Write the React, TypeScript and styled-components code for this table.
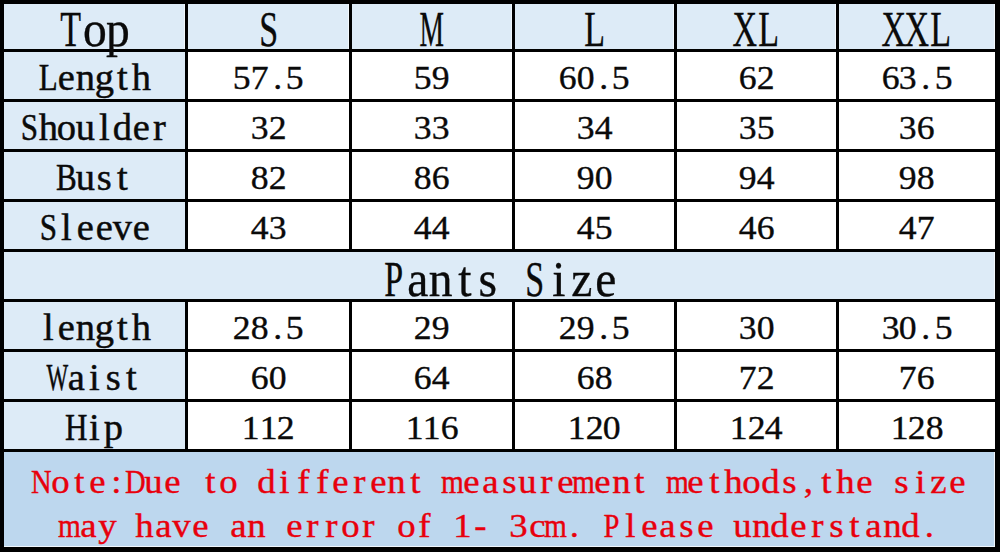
import React from "react";
import styled, { createGlobalStyle } from "styled-components";

const Global = createGlobalStyle`
  html, body { margin: 0; padding: 0; background: #000; }
  body { width: 1000px; height: 552px; overflow: hidden; }
  #root { width: 1000px; height: 552px; }
`;

const Sheet = styled.div`
  box-sizing: border-box;
  width: 1000px;
  height: 552px;
  display: grid;
  grid-template-columns: 181px 161px 160px 159px 159px 156px;
  grid-template-rows: 45px repeat(8, 47px) 95px;
  gap: 3px;
  padding: 4px 5px 5px 4px;
  background: #000;
  font-family: "Liberation Serif", "Times New Roman", "DejaVu Serif", serif;
  color: #0a0a0a;
`;

type Tone = "head" | "label" | "data" | "note";

const bg: Record<Tone, string> = {
  head: "#ddebf7",
  label: "#ddebf7",
  data: "#ffffff",
  note: "#bdd7ee",
};

const Cell = styled.div<{ $tone: Tone; $pad?: number; $span?: boolean }>`
  background: ${(p) => bg[p.$tone]};
  display: flex;
  flex-direction: column;
  align-items: center;
  justify-content: center;
  box-sizing: border-box;
  padding-top: ${(p) => p.$pad ?? 4}px;
  grid-column: ${(p) => (p.$span ? "1 / -1" : "auto")};
  box-shadow: ${(p) =>
    p.$tone === "note"
      ? "inset -1px -1px 0 rgba(255,255,255,0.75)"
      : p.$tone === "head"
      ? "inset -1px 0 0 rgba(255,255,255,0.6)"
      : "none"};
  overflow: visible;
`;

const Line = styled.div<{ $size: number; $lh: number; $color?: string; $stroke: number }>`
  display: flex;
  justify-content: center;
  font-family: "Liberation Serif", "Times New Roman", "DejaVu Serif", serif;
  font-size: ${(p) => p.$size}px;
  line-height: ${(p) => p.$lh}px;
  height: ${(p) => p.$lh}px;
  color: ${(p) => p.$color ?? "#0a0a0a"};
  -webkit-text-stroke: ${(p) => p.$stroke}px ${(p) => p.$color ?? "#0a0a0a"};
  white-space: pre;
`;

const Glyph = styled.span<{ $w: number; $k: number }>`
  display: inline-flex;
  justify-content: center;
  width: ${(p) => p.$w}px;
  transform: scaleX(${(p) => p.$k});
  white-space: pre;
`;

type Style = {
  size: number;
  w: number;
  lh: number;
  upper: number;
  lower: number;
  wide: number;
  stroke: number;
  color?: string;
};

const HEAD: Style = { size: 50, w: 23.5, lh: 50, upper: 0.68, lower: 0.95, wide: 0.55, stroke: 0.35 };
const LABEL: Style = { size: 37, w: 18.6, lh: 37, upper: 0.84, lower: 1.04, wide: 0.62, stroke: 0.45 };
const NUM: Style = { size: 34, w: 17.6, lh: 34, upper: 1, lower: 1.05, wide: 1, stroke: 0.35 };
const NOTE: Style = {
  size: 34,
  w: 18.7,
  lh: 44,
  upper: 0.84,
  lower: 1.08,
  wide: 0.64,
  stroke: 0.4,
  color: "#e8000c",
};

const kFor = (ch: string, s: Style) => {
  if (/[WM]/.test(ch)) return s.wide;
  if (/[A-Z]/.test(ch)) return s.upper;
  if (/[mw]/.test(ch)) return s.lower * 0.8;
  return s.lower;
};

const Mono: React.FC<{ text: string; s: Style }> = ({ text, s }) => (
  <Line $size={s.size} $lh={s.lh} $color={s.color} $stroke={s.stroke}>
    {Array.from(text).map((ch, i) => (
      <Glyph key={i} $w={s.w} $k={kFor(ch, s)}>
        {ch === " " ? "\u00a0" : ch}
      </Glyph>
    ))}
  </Line>
);

const sizes = ["S", "M", "L", "XL", "XXL"];

const topRows: [string, string[]][] = [
  ["Length", ["57.5", "59", "60.5", "62", "63.5"]],
  ["Shoulder", ["32", "33", "34", "35", "36"]],
  ["Bust", ["82", "86", "90", "94", "98"]],
  ["Sleeve", ["43", "44", "45", "46", "47"]],
];

const pantsRows: [string, string[]][] = [
  ["length", ["28.5", "29", "29.5", "30", "30.5"]],
  ["Waist", ["60", "64", "68", "72", "76"]],
  ["Hip", ["112", "116", "120", "124", "128"]],
];

const DataRow: React.FC<{ label: string; values: string[] }> = ({ label, values }) => (
  <>
    <Cell $tone="label">
      <Mono text={label} s={LABEL} />
    </Cell>
    {values.map((v, i) => (
      <Cell key={i} $tone="data">
        <Mono text={v} s={NUM} />
      </Cell>
    ))}
  </>
);

export default function App() {
  return (
    <>
      <Global />
      <Sheet>
        <Cell $tone="head">
          <Mono text="Top" s={HEAD} />
        </Cell>
        {sizes.map((s) => (
          <Cell key={s} $tone="head">
            <Mono text={s} s={HEAD} />
          </Cell>
        ))}
        {topRows.map(([l, v]) => (
          <DataRow key={l} label={l} values={v} />
        ))}
        <Cell $tone="head" $span $pad={7}>
          <Mono text="Pants Size" s={HEAD} />
        </Cell>
        {pantsRows.map(([l, v]) => (
          <DataRow key={l} label={l} values={v} />
        ))}
        <Cell $tone="note" $span $pad={9}>
          <Mono text="Note:Due to different measurement methods,the size" s={NOTE} />
          <Mono text="may have an error of 1- 3cm. Please understand." s={NOTE} />
        </Cell>
      </Sheet>
    </>
  );
}
